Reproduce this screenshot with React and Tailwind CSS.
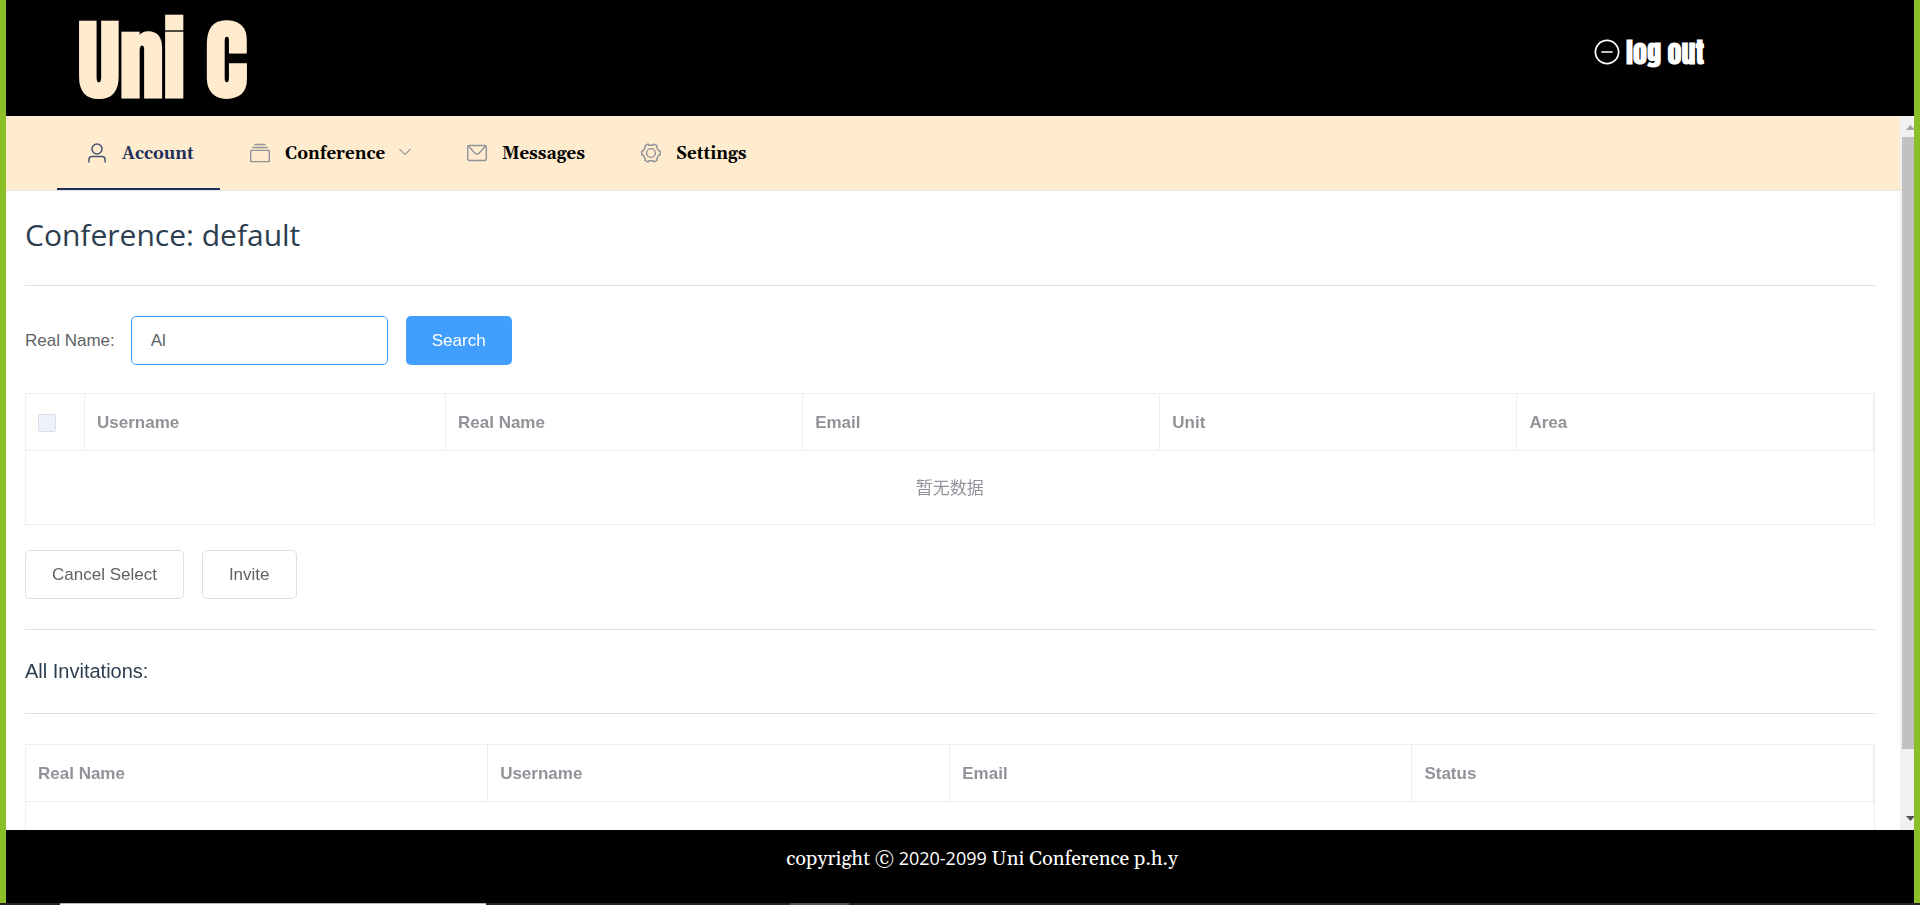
import { useState } from 'react';

function UserIcon() {
  return (
    <svg width="20" height="20" viewBox="0 0 20 20" fill="none" stroke="currentColor" strokeWidth="1.5" strokeLinecap="round">
      <circle cx="10" cy="6" r="5" />
      <path d="M1.9 19v-2.2a3.2 3.2 0 0 1 3.200-3.200h9.800a3.200 3.200 0 0 1 3.200 3.200V19" />
    </svg>
  );
}

function CollectionIcon() {
  return (
    <svg width="20" height="20" viewBox="0 0 20 20" fill="none" stroke="currentColor" strokeWidth="1.4" strokeLinecap="round" strokeLinejoin="round">
      <path d="M5 1.500h10M2.800 4.500h14.400" />
      <rect x="0.7" y="7.400" width="18.600" height="11.200" />
    </svg>
  );
}

function MessageIcon() {
  return (
    <svg width="20" height="20" viewBox="0 0 20 20" fill="none" stroke="currentColor" strokeWidth="1.4" strokeLinecap="round" strokeLinejoin="round">
      <rect x="0.7" y="2.5" width="18.6" height="15" rx="1.4" />
      <path d="M1.600 3.300l5.900 6.500a3.300 3.300 0 0 0 5 0l5.900-6.500" />
    </svg>
  );
}

function SettingIcon() {
  return (
    <svg width="20" height="20" viewBox="0 0 20 20" fill="none" stroke="currentColor" strokeWidth="1.4" strokeLinejoin="round">
      <circle cx="10" cy="10" r="4.4" />
      <path d="M6.900 1L7.900 2.200H12.100L13.100 1L16.200 2.800L15.700 4.300L17.800 7.800L19.300 8.200V11.800L17.800 12.200L15.700 15.700L16.200 17.200L13.100 19L12.100 17.800H7.900L6.900 19L3.800 17.200L4.300 15.700L2.200 12.200L0.700 11.800V8.200L2.200 7.800L4.300 4.300L3.800 2.800Z" />
    </svg>
  );
}

function ArrowDownIcon() {
  return (
    <svg className="ml-3.5" width="12" height="12" viewBox="0 0 12 12" fill="none" stroke="#909399" strokeWidth="1.1" strokeLinecap="round" strokeLinejoin="round">
      <path d="M0.8 2.4L6 7.4l5.2-5" />
    </svg>
  );
}

function RemoveIcon() {
  return (
    <svg width="26" height="26" viewBox="0 0 26 26" fill="none" stroke="currentColor" strokeWidth="1.7" strokeLinecap="round">
      <circle cx="13" cy="13" r="11.6" />
      <path d="M8 13h10" />
    </svg>
  );
}

const navItem = 'flex h-full items-center border-b-2 pt-0.5 pr-5 pl-[25px]';

function NavItem({ icon, label, active, width, children }) {
  return (
    <li className={width}>
      <a href="#" className={`${navItem} ${active ? 'border-[#222f5b] text-[#222f5b]' : 'border-transparent text-black'}`}>
        <span className={`mr-2.5 flex w-[30px] justify-center ${active ? 'text-[#4a5376]' : 'text-[#909399]'}`}>{icon}</span>
        <span className="pt-1">{label}</span>
        {children}
      </a>
    </li>
  );
}

const th = 'border border-[#ebeef5] px-3 pt-0.5 text-left font-bold last:border-r-2';
const plainButton = 'h-[49px] rounded-[5px] border border-[#dcdfe6] px-[26px] text-[#606266]';

export default function App() {
  const [name, setName] = useState('Al');
  return (
    <div className="flex h-screen flex-col overflow-hidden bg-black font-['Liberation_Sans','Noto_Sans_CJK_SC',sans-serif] text-[17px]">
      <div className="flex min-h-0 flex-1 flex-col border-x-[6px] border-[#8bbf26]">
        <header className="flex h-[116px] shrink-0 items-center justify-between bg-black pr-[210px] pl-[72px]">
          <h1 className="pt-1 font-['Impact','Anton','Liberation_Sans',sans-serif] text-[88px] leading-[116px] font-bold text-[#ffebcd]">Uni C</h1>
          <button type="button" className="mb-3 flex items-center gap-1.5 font-['Impact','Anton','Liberation_Sans',sans-serif] text-[28px] leading-[42px] font-bold text-white">
            <RemoveIcon />
            log out
          </button>
        </header>

        <div className="flex min-h-0 flex-1">
          <div className="min-w-0 flex-1 overflow-hidden bg-white">
            <nav className="border-b border-[#e6e6e6] bg-[#ffebcd] pl-[51px]">
              <ul className="flex h-[74px] font-['Georgia','Gelasio','Liberation_Serif',serif] text-[17px] font-bold">
                <NavItem icon={<UserIcon />} label="Account" width="min-w-[163px]" active />
                <NavItem icon={<CollectionIcon />} label="Conference" width="min-w-[217px]"><ArrowDownIcon /></NavItem>
                <NavItem icon={<MessageIcon />} label="Messages" width="min-w-[174px]" />
                <NavItem icon={<SettingIcon />} label="Settings" width="min-w-[163px]" />
              </ul>
            </nav>

            <main className="pr-[25px] pl-[19px]">
              <h2 className="pt-[23px] font-['Segoe_UI','Open_Sans',sans-serif] text-[30px] leading-[42px] text-[#2c3e50]">Conference: default</h2>
              <hr className="mt-[29px] border-[#dcdfe6]" />

              <form className="mt-[30px] flex items-center text-[#606266]" onSubmit={(e) => e.preventDefault()}>
                <label htmlFor="real-name" className="mr-4">Real Name:</label>
                <input id="real-name" autoFocus value={name} onChange={(e) => setName(e.target.value)} className="h-[49px] w-[257px] rounded-[5px] border border-[#409eff] px-[19px] outline-none" />
                <button type="submit" className="ml-[18px] h-[49px] rounded-[5px] bg-[#409eff] px-[26px] text-white">Search</button>
              </form>

              <table className="mt-7 w-full table-fixed border-collapse border border-[#ebeef5] text-[#909399]">
                <colgroup>
                  <col className="w-[59px]" />
                  <col className="w-[361px]" />
                  <col />
                  <col />
                  <col />
                  <col />
                </colgroup>
                <thead>
                  <tr className="h-[57px]">
                    <th className={th}>
                      <input type="checkbox" disabled aria-label="Select all" className="block size-[18px] appearance-none rounded-[2px] border border-[#dcdfe6] bg-[#edf2fc]" />
                    </th>
                    <th className={th}>Username</th>
                    <th className={th}>Real Name</th>
                    <th className={th}>Email</th>
                    <th className={th}>Unit</th>
                    <th className={th}>Area</th>
                  </tr>
                </thead>
                <tbody>
                  <tr className="h-[74px]">
                    <td colSpan={6} className="pt-0.5 text-center">暂无数据</td>
                  </tr>
                </tbody>
              </table>

              <div className="mt-[25px] flex gap-[18px]">
                <button type="button" className={plainButton}>Cancel Select</button>
                <button type="button" className={plainButton}>Invite</button>
              </div>
              <hr className="mt-[30px] border-[#dcdfe6]" />
              <h3 className="mt-[26px] text-[20px] leading-[30px] text-[#2c3e50]">All Invitations:</h3>
              <hr className="mt-[27px] border-[#dcdfe6]" />

              <table className="mt-[30px] w-full table-fixed border-collapse border border-[#ebeef5] text-[#909399]">
                <thead>
                  <tr className="h-[57px]">
                    <th className={th}>Real Name</th>
                    <th className={th}>Username</th>
                    <th className={th}>Email</th>
                    <th className={th}>Status</th>
                  </tr>
                </thead>
                <tbody>
                  <tr className="h-[74px]">
                    <td colSpan={4} />
                  </tr>
                </tbody>
              </table>
            </main>
          </div>

          <div className="flex w-[14px] shrink-0 flex-col justify-between overflow-hidden bg-[#f1f1f1] pl-0.5" aria-hidden="true">
            <svg className="shrink-0" width="16" height="21" viewBox="0 0 16 21"><path d="M4 14h9L8.500 9z" fill="#a3a3a3" /></svg>
            <div className="flex min-h-0 flex-1 flex-col"><div className="h-[91%] bg-[#c1c1c1]" /></div>
            <svg className="shrink-0" width="16" height="21" viewBox="0 0 16 21"><path d="M4 7h9l-4.500 5z" fill="#505050" /></svg>
          </div>
        </div>

        <footer className="h-[73px] shrink-0 bg-black pt-3.5 pl-11 text-center font-['Georgia','Gelasio','Liberation_Serif',serif] text-[20px] leading-[28px] text-white">
          copyright © <span className="font-['Segoe_UI','Open_Sans',sans-serif] text-[18px]">2020-2099</span> Uni Conference p.h.y
        </footer>
      </div>
      <div className="flex h-0.5 shrink-0 bg-[#2a1f20]">
        <div className="ml-[60px] w-[426px] border-t border-[#b5b5b5] bg-white" />
        <div className="ml-[304px] w-[59px] bg-[#5a5050]" />
      </div>
    </div>
  );
}
